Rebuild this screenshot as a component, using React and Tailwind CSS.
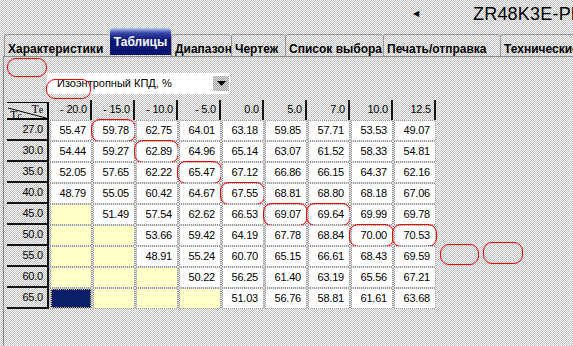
import React from "react";

const cols = ["- 20.0", "- 15.0", "- 10.0", "- 5.0", "0.0", "5.0", "7.0", "10.0", "12.5"];
const rows = [
  ["27.0", ["55.47", "59.78", "62.75", "64.01", "63.18", "59.85", "57.71", "53.53", "49.07"]],
  ["30.0", ["54.44", "59.27", "62.89", "64.96", "65.14", "63.07", "61.52", "58.33", "54.81"]],
  ["35.0", ["52.05", "57.65", "62.22", "65.47", "67.12", "66.86", "66.15", "64.37", "62.16"]],
  ["40.0", ["48.79", "55.05", "60.42", "64.67", "67.55", "68.81", "68.80", "68.18", "67.06"]],
  ["45.0", [null, "51.49", "57.54", "62.62", "66.53", "69.07", "69.64", "69.99", "69.78"]],
  ["50.0", [null, null, "53.66", "59.42", "64.19", "67.78", "68.84", "70.00", "70.53"]],
  ["55.0", [null, null, "48.91", "55.24", "60.70", "65.15", "66.61", "68.43", "69.59"]],
  ["60.0", [null, null, null, "50.22", "56.25", "61.40", "63.19", "65.56", "67.21"]],
  ["65.0", ["SEL", null, null, null, "51.03", "56.76", "58.81", "61.61", "63.68"]],
];
const circled = new Set(["0-1", "1-2", "2-3", "3-4", "4-5", "4-6", "5-7", "5-8"]);

const dither =
  "bg-[repeating-conic-gradient(#bcbcbc_0%_25%,#ffffff_0%_50%)] bg-[length:2px_2px]";
const ditherDark =
  "bg-[repeating-conic-gradient(#9c9c9c_0%_25%,#e4e4e4_0%_50%)] bg-[length:2px_2px]";

const tabs = [
  ["Характеристики", "w-[106px]"],
  ["Таблицы", "w-[61px]", true],
  ["Диапазон", "w-[60px]"],
  ["Чертеж", "w-[54px]"],
  ["Список выбора", "w-[98px]"],
  ["Печать/отправка", "w-[117px]"],
  ["Технические", "w-[90px]"],
];

function Oval({ className }) {
  return (
    <div
      className={
        "pointer-events-none absolute rounded-[9px] border-[1.5px] border-[#f00000] " + className
      }
    />
  );
}

export default function App() {
  return (
    <div
      className={
        "relative h-[346px] w-[573px] overflow-hidden text-black " + dither
      }
      style={{ fontFamily: '"Liberation Sans", Arial, sans-serif' }}
    >
      {/* title bar */}
      <div className="flex h-[27px] items-center whitespace-nowrap pl-[413px]">
        <span className="text-[8px] leading-none">◀</span>
        <span className="ml-[54px] text-[18px] leading-none tracking-[0.2px]">ZR48K3E-PF</span>
      </div>

      {/* tabs */}
      <div className="flex h-[29px] items-end whitespace-nowrap pl-[4px]">
        {tabs.map(([label, w, sel]) =>
          sel ? (
            <div
              key={label}
              className={
                "mb-[1px] flex h-[27px] shrink-0 items-start justify-center rounded-t-[3px] bg-[linear-gradient(to_bottom,#b8c8ec_0px,#3848a8_5px,#0c1878_12px,#0a1470_100%)] pt-[5px] text-[12px] font-bold text-white " +
                w
              }
            >
              {label}
            </div>
          ) : (
            <div
              key={label}
              className={
                "flex h-[22px] shrink-0 items-start rounded-t-[3px] border-l border-t border-[#9a9a9a] pl-[3px] pt-[5px] text-[12px] font-bold " +
                w
              }
            >
              {label}
            </div>
          )
        )}
      </div>

      {/* panel */}
      <div className="ml-[3px] h-[290px] border-l border-t border-[#8c8c8c]">
        {/* dropdown */}
        <div className="ml-[43px] mt-[16px] flex h-[21px] w-[183px] items-center bg-white pl-[10px]">
          <span className="flex-1 text-[11px]">Изоэнтропный КПД, %</span>
          <div className={"mr-[1px] flex h-[15px] w-[16px] items-center justify-center " + ditherDark}>
            <svg width="9" height="5" viewBox="0 0 9 5">
              <path d="M0 0H9L4.5 5Z" fill="#000" />
            </svg>
          </div>
        </div>

        {/* table */}
        <div className="ml-[3px] mt-[6px] grid grid-cols-[42px_repeat(9,43px)] grid-rows-[20px_repeat(9,21px)] text-[11px] tracking-[-0.2px]">
          {/* corner */}
          <div className="relative mt-[2px] border-b-2 border-r-2 border-t border-black">
            <svg className="absolute inset-0" width="40" height="17" viewBox="0 0 40 17">
              <line x1="1" y1="5" x2="39" y2="15" stroke="#000" strokeWidth="1" />
            </svg>
            <span
              className="absolute right-[4px] top-[0px] text-[12px] leading-none"
              style={{ fontFamily: '"Liberation Serif", serif' }}
            >
              T<span className="text-[10px]">e</span>
            </span>
            <span
              className="absolute bottom-[-3px] left-[3px] text-[12px] leading-none"
              style={{ fontFamily: '"Liberation Serif", serif' }}
            >
              T<span className="text-[10px]">c</span>
            </span>
          </div>
          {cols.map((c) => (
            <div
              key={c}
              className="flex items-center justify-end whitespace-pre border-r-2 border-[#141414] pb-[1px] pr-[3px]"
            >
              {c}
            </div>
          ))}

          {rows.map(([label, vals], r) => (
            <React.Fragment key={label}>
              <div className="flex items-center justify-end border-b-2 border-r-2 border-[#141414] pr-[4px]">
                {label}
              </div>
              {vals.map((v, c) => {
                const isCircled = circled.has(r + "-" + c);
                let inner;
                if (v === "SEL") {
                  inner = (
                    <div className="h-full border border-dotted border-[#d8b870] bg-[#0a1f6a]" />
                  );
                } else if (v === null) {
                  inner = <div className="h-full bg-[#ffffc8]" />;
                } else {
                  inner = (
                    <div className="flex h-full items-center justify-end bg-white pr-[5px]">{v}</div>
                  );
                }
                return (
                  <div key={c} className={"relative py-[1px] pl-[2px] pr-[1px] " + ditherDark}>
                    {inner}
                    {isCircled && <Oval className="-inset-[1px]" />}
                  </div>
                );
              })}
            </React.Fragment>
          ))}
        </div>
      </div>

      {/* annotation ovals */}
      <Oval className="left-[7px] top-[58px] h-[19px] w-[40px]" />
      <Oval className="left-[46px] top-[79px] h-[20px] w-[45px]" />
      <Oval className="left-[440px] top-[244px] h-[21px] w-[39px]" />
      <Oval className="left-[483px] top-[242px] h-[22px] w-[40px]" />
    </div>
  );
}
